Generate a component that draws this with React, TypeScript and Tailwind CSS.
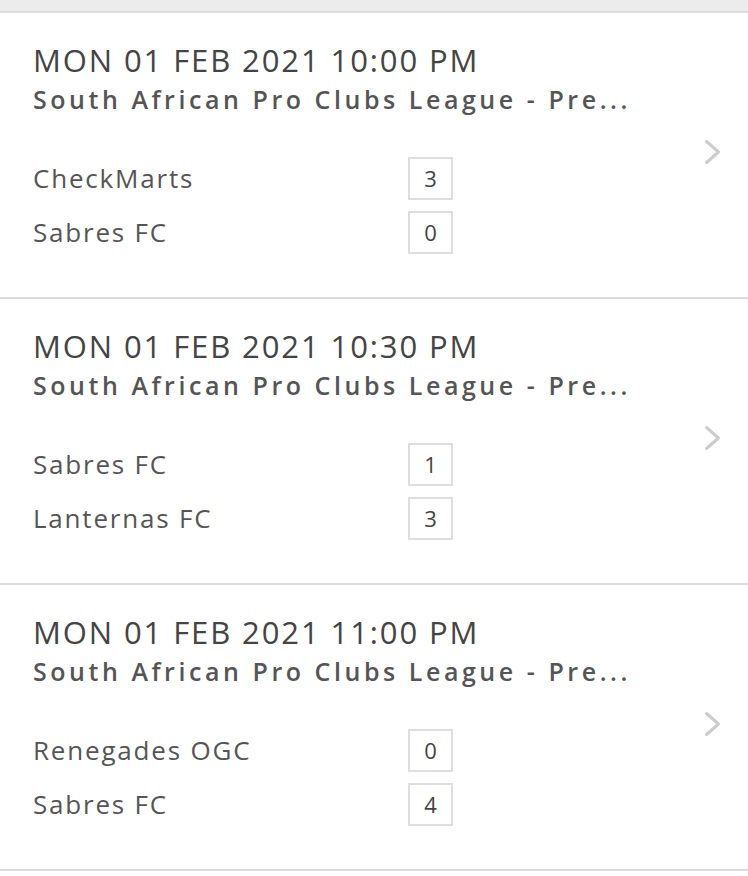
import type { FC } from 'react';

type Match = {
  date: string;
  league: string;
  home: { name: string; score: number };
  away: { name: string; score: number };
};

// league names are shown already shortened, as in the app
const MATCHES: Match[] = [
  {
    date: 'MON 01 FEB 2021 10:00 PM',
    league: 'South African Pro Clubs League - Pre...',
    home: { name: 'CheckMarts', score: 3 },
    away: { name: 'Sabres FC', score: 0 },
  },
  {
    date: 'MON 01 FEB 2021 10:30 PM',
    league: 'South African Pro Clubs League - Pre...',
    home: { name: 'Sabres FC', score: 1 },
    away: { name: 'Lanternas FC', score: 3 },
  },
  {
    date: 'MON 01 FEB 2021 11:00 PM',
    league: 'South African Pro Clubs League - Pre...',
    home: { name: 'Renegades OGC', score: 0 },
    away: { name: 'Sabres FC', score: 4 },
  },
];

const TeamRow: FC<{ name: string; score: number }> = ({ name, score }) => (
  <div className="flex items-center h-[54px]">
    <span className="w-[375px] text-[26px] text-[#555] tracking-[1.8px] whitespace-nowrap font-['Open_Sans',sans-serif]">
      {name}
    </span>
    <span className="w-[45px] h-[43px] border-2 border-[#dedede] flex items-center justify-center text-[22px] text-[#444] font-['Open_Sans',sans-serif]">
      {score}
    </span>
  </div>
);

const MatchCard: FC<{ match: Match }> = ({ match }) => (
  <div className="flex h-[286px] border-b-2 border-[#dcdcdc] bg-white pl-[33px] pr-[26px]">
    <div className="flex-1 min-w-0 pt-[29px]">
      <div className="text-[31px] leading-[36px] tracking-[1.9px] text-[#444] whitespace-nowrap font-['Open_Sans',sans-serif]">
        {match.date}
      </div>
      <div className="mt-[6px] text-[25px] leading-[30px] font-semibold tracking-[3.55px] text-[#555] whitespace-nowrap font-['Open_Sans',sans-serif]">
        {match.league}
      </div>
      <div className="mt-[37px]">
        <TeamRow name={match.home.name} score={match.home.score} />
        <TeamRow name={match.away.name} score={match.away.score} />
      </div>
    </div>
    <svg width="18" height="26" viewBox="0 0 18 26" className="shrink-0 self-center -mt-[7px]">
      <path d="M2.5 2.5 L14.5 13 L2.5 23.5" fill="none" stroke="#cccccc" strokeWidth="3" strokeLinecap="round" strokeLinejoin="round" />
    </svg>
  </div>
);

export default function App() {
  return (
    <div className="w-[748px] min-h-[876px] bg-white">
      <div className="h-[13px] bg-[#ececec] border-b-2 border-[#dcdcdc]" />
      {MATCHES.map((m, i) => (
        <MatchCard key={i} match={m} />
      ))}
    </div>
  );
}
